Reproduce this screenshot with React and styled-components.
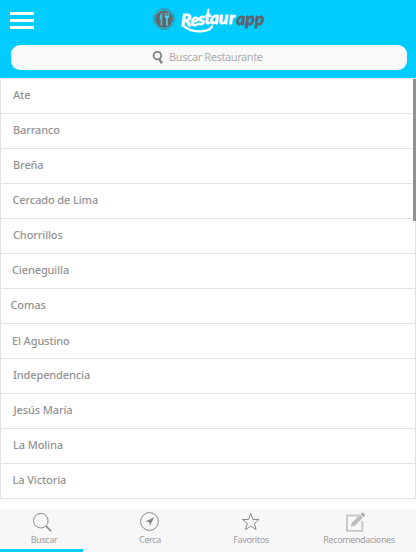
import React from 'react';
import styled, { createGlobalStyle } from 'styled-components';

const GlobalStyle = createGlobalStyle`
  * { box-sizing: border-box; }
  body { margin: 0; background: #fff; font-family: "Noto Sans", "Open Sans", sans-serif; overflow: hidden; }
`;

const Screen = styled.div`
  width: 416px;
  height: 552px;
  display: flex;
  flex-direction: column;
  background: #fff;
`;

const Header = styled.header`
  height: 78px;
  flex: none;
  background: #00ccff;
  padding: 0 9px 0 11px;
`;

const TopBar = styled.div`
  height: 45px;
  display: grid;
  grid-template-columns: 141px 114px;
  align-items: start;
`;

const MenuButton = styled.button`
  width: 24px;
  height: 17px;
  margin: 12px 0 0 -1px;
  padding: 0;
  border: 0;
  background: none;
  display: flex;
  flex-direction: column;
  justify-content: space-between;
`;

const MenuLine = styled.span`
  height: 3px;
  background: #fff;
`;

const Logo = styled.svg`
  display: block;
  margin-top: 4px;
  overflow: visible;
`;

const LogoText = styled.text`
  font-family: Lato, "Open Sans", sans-serif;
  font-size: 17px;
  font-weight: 700;
  font-style: italic;
  fill: ${(p) => p.$color};
  stroke: ${(p) => p.$color};
  stroke-width: 0.8px;
  stroke-linejoin: round;
`;

const SearchField = styled.div`
  height: 25px;
  border-radius: 9px;
  background: #f9f9f9;
  color: #adadad;
  display: flex;
  align-items: center;
  padding-left: 141px;
  font-size: 11px;
  line-height: 14px;
`;

const SearchText = styled.span`
  margin: -1px 0 0 5px;
  letter-spacing: -0.4px;
  white-space: nowrap;
`;

const ListArea = styled.main`
  position: relative;
  height: 431px;
  flex: none;
`;

const List = styled.ul`
  list-style: none;
  margin: 0;
  padding: 0;
  border: 1px solid #e4e4e4;
  border-bottom: 0;
`;

const Row = styled.li`
  height: 35px;
  border-bottom: 1px solid #e4e4e4;
  padding: ${(p) => p.$top}px 0 0 ${(p) => p.$indent}px;
  font-size: 11px;
  font-weight: 500;
  line-height: 16px;
  letter-spacing: -0.12px;
  color: #929292;
`;

const ScrollThumb = styled.div`
  position: absolute;
  top: 1px;
  right: 0;
  width: 3px;
  height: 142px;
  background: #929292;
`;

const TabBar = styled.nav`
  height: 43px;
  flex: none;
  background: #f7f7f7;
  display: grid;
  grid-template-columns: 88px 124px 78px 126px;
  position: relative;
`;

const Tab = styled.a`
  display: flex;
  flex-direction: column;
  align-items: center;
  padding: 3px 0 0 ${(p) => p.$left || 0}px;
  font-size: 9px;
  line-height: 13px;
  letter-spacing: -0.38px;
  color: #a0a0a0;
  white-space: nowrap;
`;

const TabIcon = styled.svg`
  display: block;
  width: 22px;
  height: 21px;
  flex: none;
  fill: none;
  stroke: #8a8a8a;
  margin-left: ${(p) => p.$shift || 0}px;
`;

const ActiveLine = styled.div`
  position: absolute;
  left: 0;
  bottom: 0;
  width: 83px;
  height: 3px;
  background: #00ccff;
`;

const districts = [
  ['Ate', 12],
  ['Barranco', 12],
  ['Breña', 12],
  ['Cercado de Lima', 11.5],
  ['Chorrillos', 12],
  ['Cieneguilla', 11],
  ['Comas', 9.5],
  ['El Agustino', 11, 9],
  ['Independencia', 12],
  ['Jesús María', 12.5],
  ['La Molina', 12],
  ['La Victoria', 11.5],
];

function BrandLogo() {
  return (
    <Logo width="114" height="30" viewBox="0 0 114 30">
      <circle cx="12" cy="15" r="10.3" fill="none" stroke="#4c7d8c" strokeWidth="1" />
      <circle cx="12" cy="15" r="8.8" fill="#666" />
      <path d="M10.2 8.6q-2.6 1.6-2.5 7.2h1v5.6h1.5z" fill="#35c8ee" />
      <path d="M12.7 8.8v3.6q0 1.4 1.4 1.8v7.6h1.6v-7.6q1.4-.4 1.4-1.8V8.8h-.8v3.3h-1V8.8h-.8v3.3h-1V8.8z" fill="#4fd3f5" />
      <LogoText x="29 38.6 46 52.6 58 67 77" y="21.5 21.5 21.2 20 20.3 20 20" $color="#fff">Restaur</LogoText>
      <LogoText x="84.6 93.6 103" y="21" $color="#5c6468">app</LogoText>
      <path d="M31.5 21.8q7 6.2 18 5.6q9-.8 10.5-5" fill="none" stroke="#fff" strokeWidth="2.3" strokeLinecap="round" />
      <path d="M56.5 5.5l-1.6 8" fill="none" stroke="#fff" strokeWidth="2" strokeLinecap="round" />
    </Logo>
  );
}

export default function App() {
  return (
    <Screen>
      <GlobalStyle />
      <Header>
        <TopBar>
          <MenuButton aria-label="Menú"><MenuLine /><MenuLine /><MenuLine /></MenuButton>
          <BrandLogo />
        </TopBar>
        <SearchField>
          <svg width="12" height="14" viewBox="0 0 12 14" fill="none" stroke="#858585">
            <circle cx="5.4" cy="4.6" r="3.8" strokeWidth="1.9" />
            <path d="M7.4 8l2.5 4.4" strokeWidth="2.5" />
          </svg>
          <SearchText>Buscar Restaurante</SearchText>
        </SearchField>
      </Header>
      <ListArea>
        <List>
          {districts.map(([name, indent, top = 8]) => (
            <Row key={name} $indent={indent} $top={top}>{name}</Row>
          ))}
        </List>
        <ScrollThumb />
      </ListArea>
      <TabBar>
        <Tab>
          <TabIcon viewBox="0 0 22 21" $shift={-6}>
            <circle cx="10.8" cy="8.7" r="7.3" />
            <path d="M16 14l5 5.2" strokeWidth="1.7" />
          </TabIcon>
          Buscar
        </Tab>
        <Tab>
          <TabIcon viewBox="0 0 22 21">
            <circle cx="10.5" cy="9.5" r="8.9" />
            <path d="M15.2 5.2L6.3 9.5l4 .5.6 4z" fill="#858585" stroke="none" />
          </TabIcon>
          Cerca
        </Tab>
        <Tab>
          <TabIcon viewBox="0 0 22 21">
            <path d="M10.7 1.5l2.2 6h6.2l-4.8 4 1.8 6.2-5.4-3.6-5.3 3.6 1.8-6.2-4.8-4h6.2z" />
          </TabIcon>
          Favoritos
        </Tab>
        <Tab $left={12}>
          <TabIcon viewBox="0 0 22 21" $shift={-9}>
            <path d="M15 3.5H3v15.4h15.4V9" stroke="#c7c7c7" strokeWidth="1.9" />
            <path d="M6.7 15.1l1.3-4.5 8-7.8 2.9 2.9-7.9 7.9z" fill="#bdbdbd" stroke="none" />
            <path d="M16.6 2.1l1.2-1.2q.8-.8 1.6 0l1.3 1.3q.8.8 0 1.6l-1.2 1.2z" fill="#aaa" stroke="none" />
          </TabIcon>
          Recomendaciones
        </Tab>
        <ActiveLine />
      </TabBar>
    </Screen>
  );
}
